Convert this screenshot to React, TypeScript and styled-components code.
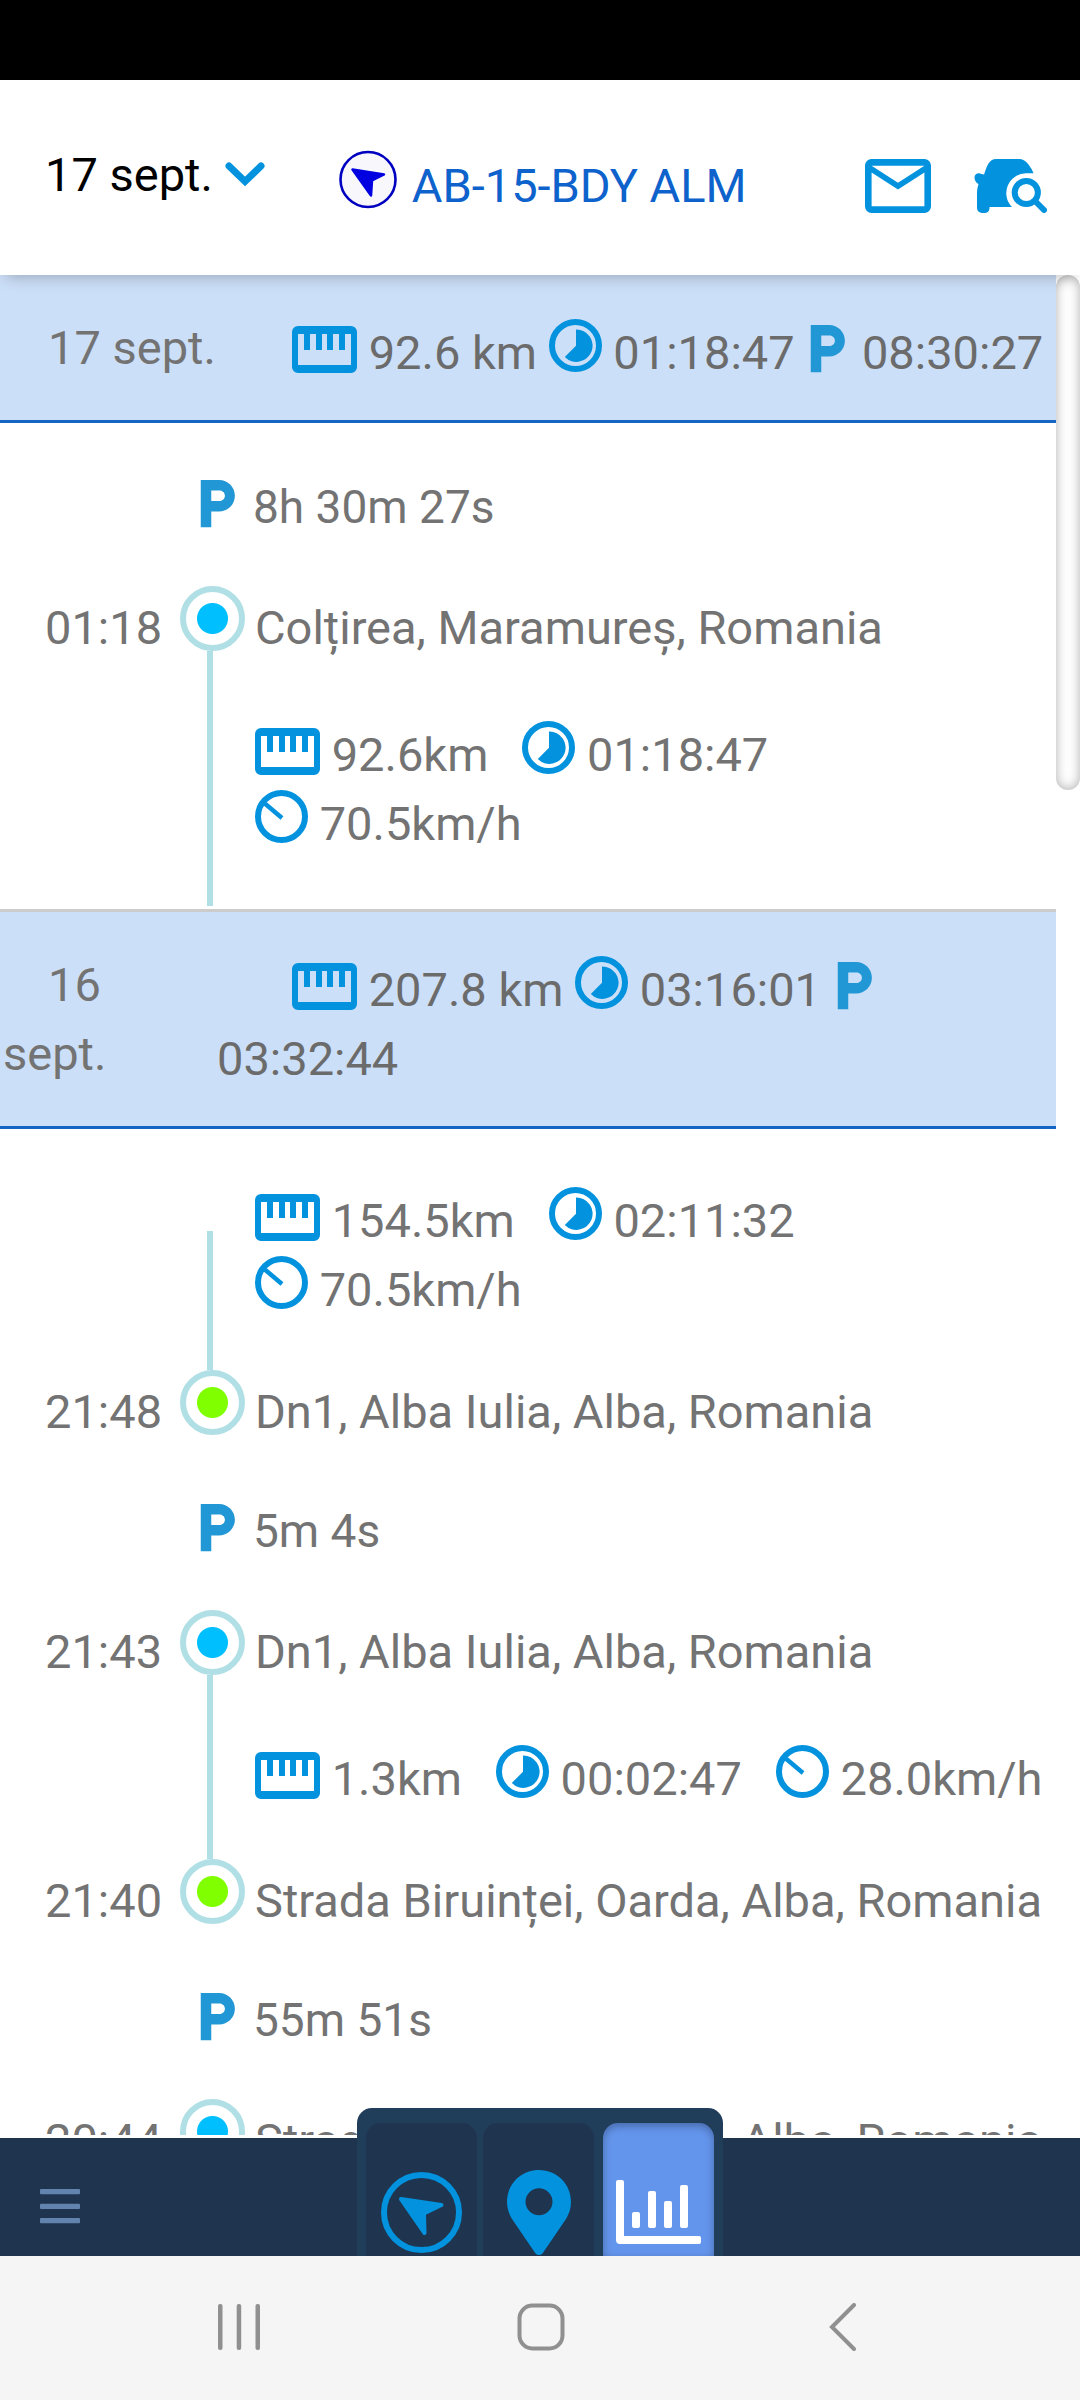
import React from "react";
import styled, { createGlobalStyle, css } from "styled-components";
import { MdLocalParking } from "react-icons/md";

const color = {
  accent: "#0292de",
  parking: "#2297d5",
  link: "#0d62cc",
  text: "#737373",
  summary: "#6b6b6b",
  band: "#ccdff8",
  bandLine: "#1566c4",
  rail: "#b0dfe5",
  navy: "#1e344f",
  dock: "#203d5a",
  active: "#6495ed",
  system: "#909090",
};

const GlobalStyle = createGlobalStyle`
  * { box-sizing: border-box; }
  body { margin: 0; background: #fff; }
`;

const Screen = styled.div`
  display: flex;
  flex-direction: column;
  height: 100vh;
  overflow: hidden;
  background: #fff;
  color: ${color.text};
  font-family: Roboto, "Noto Sans", sans-serif;
  font-size: 47px;
  line-height: 69px;
`;

const StatusBar = styled.div`
  flex: none;
  height: 80px;
  background: #000;
`;

const buttonReset = css`
  margin: 0;
  padding: 0;
  border: 0;
  background: none;
  font: inherit;
  color: inherit;
  cursor: pointer;
`;

const Header = styled.header`
  position: relative;
  z-index: 1;
  flex: none;
  display: flex;
  align-items: flex-start;
  height: 195px;
  padding: 60px 33px 0 45px;
  background: #fff;
  box-shadow: 0 8px 14px -6px rgba(0, 0, 0, 0.25);
`;

const DateButton = styled.button`
  ${buttonReset}
  display: flex;
  align-items: center;
  gap: 12px;
  color: #000;
`;

const Vehicle = styled.a`
  display: flex;
  align-items: flex-start;
  gap: 15px;
  margin: 10px auto 0 74px;
  line-height: 72px;
  color: ${color.link};
  text-decoration: none;
`;

const HeaderActions = styled.div`
  display: flex;
  gap: 43px;
  margin-top: 19px;
`;

const IconButton = styled.button`
  ${buttonReset}
  display: flex;
`;

const Scroller = styled.div`
  flex: 1;
  min-height: 0;
  display: flex;
  align-items: flex-start;
  overflow: hidden;
  margin-bottom: 3px;
`;

const Timeline = styled.main`
  flex: 1;
  min-width: 0;
`;

const ScrollTrack = styled.div`
  flex: none;
  width: 24px;
`;

const ScrollThumb = styled.div`
  height: 515px;
  border-radius: 12px;
  background: #fff;
  box-shadow: inset 0 0 12px rgba(0, 0, 0, 0.32);
`;

const DayBand = styled.header`
  display: grid;
  grid-template-columns: 217px 1fr;
  background: ${color.band};
  border-bottom: 3px solid ${color.bandLine};
`;

const DayDate = styled.h2<{ $stacked?: boolean }>`
  margin: 0;
  padding: 38px 0 38px 3px;
  width: ${(p) => (p.$stacked ? "min-content" : "auto")};
  font-size: inherit;
  font-weight: 400;
  text-indent: 45px;
`;

const DaySummary = styled.p`
  margin: 0;
  padding: 43px 0 33px;
  text-indent: 75px;
  color: ${color.summary};
`;

const Day = styled.section`
  & + & {
    border-top: 3px solid #ccc;
  }
`;

const Entries = styled.ol`
  margin: 0;
  padding: 24px 0 3px;
  list-style: none;
`;

const Entry = styled.li`
  display: grid;
  grid-template-columns: 135px 65px 1fr;
  padding-left: 45px;
`;

const Time = styled.time`
  padding: 26px 0 25px;
`;

const Rail = styled.div`
  display: flex;
  flex-direction: column;
`;

const RailLine = styled.div<{ $before?: boolean; $startsHere?: boolean }>`
  flex: ${(p) => (p.$before ? "none" : 1)};
  height: ${(p) => (p.$before ? "19px" : "auto")};
  width: 6px;
  margin-top: ${(p) => (p.$startsHere ? "78px" : 0)};
  margin-left: 27px;
  background: ${color.rail};
`;

const RailGap = styled.div`
  height: 19px;
`;

const Stop = styled.div<{ $arrival: boolean }>`
  flex: none;
  height: 65px;
  border: 6px solid ${color.rail};
  border-radius: 50%;
  background: radial-gradient(
    circle,
    ${(p) => (p.$arrival ? "#7fff00" : "#00bfff")} 15px,
    #fff 16px
  );
`;

const PlaceName = styled.div`
  padding: 26px 0 25px 10px;
`;

const ParkedTime = styled.div`
  padding: 26px 0 25px 8px;
  font-size: 46px;
`;

const ParkingRail = styled.div`
  padding: 26px 0 25px 16px;
`;

const Stats = styled.div<{ $last?: boolean }>`
  display: flex;
  flex-wrap: wrap;
  column-gap: 34px;
  padding: 33px 0 ${(p) => (p.$last ? 48 : 27)}px 10px;
`;

const Stat = styled.span`
  white-space: nowrap;
`;

const Glyph = styled.svg`
  display: inline-block;
  vertical-align: -4px;
  fill: none;
`;

const ParkingGlyph = styled(MdLocalParking)`
  width: 63px;
  height: 63px;
  margin: -8px -8px -8px -11px;
  vertical-align: -3px;
  color: ${color.parking};
`;

const Footer = styled.footer`
  position: relative;
  z-index: 1;
  flex: none;
  display: grid;
  grid-template-columns: 1fr auto 1fr;
  align-items: start;
  height: 118px;
  background: ${color.navy};
`;

const MenuButton = styled.button`
  ${buttonReset}
  display: flex;
  justify-self: start;
  padding: 51px 40px 0;
`;

const Dock = styled.nav`
  display: flex;
  gap: 6px;
  height: 148px;
  margin-top: -30px;
  padding: 15px 9px 0;
  border-radius: 15px 15px 0 0;
  background: ${color.dock};
`;

const DockTab = styled.button<{ $active?: boolean }>`
  ${buttonReset}
  display: flex;
  align-items: center;
  justify-content: center;
  width: 111px;
  height: 133px;
  padding-top: 45px;
  margin-left: ${(p) => (p.$active ? "3px" : 0)};
  border-radius: 15px 15px 0 0;
  background: ${(p) => (p.$active ? color.active : color.navy)};
  box-shadow: ${(p) => (p.$active ? "inset 0 3px 9px rgba(0, 0, 0, 0.3)" : "none")};
`;

const SystemNav = styled.nav`
  flex: none;
  display: flex;
  justify-content: center;
  height: 144px;
  padding: 0 0 2px 2px;
  background: #f5f5f5;
`;

const SystemButton = styled.button`
  ${buttonReset}
  display: flex;
  align-items: center;
  justify-content: center;
  width: 28%;
`;

const RulerIcon = () => (
  <Glyph width="65" height="47" viewBox="0 0 65 47" aria-hidden="true">
    <path
      fill={color.accent}
      fillRule="evenodd"
      d="M6 0H59a6 6 0 0 1 6 6V41a6 6 0 0 1-6 6H6a6 6 0 0 1-6-6V6a6 6 0 0 1 6-6ZM6 8V39H59V8H53V24H47V8H41V24H35V8H30V24H24V8H18V24H12V8Z"
    />
  </Glyph>
);

const ClockIcon = () => (
  <Glyph width="53" height="54" viewBox="0 0 53 54" aria-hidden="true">
    <circle cx="26.5" cy="26.5" r="23.5" stroke={color.accent} strokeWidth="6" />
    <path fill={color.accent} d="M27 10.5A16.2 16.2 0 1 1 15.8 38L27 26.7Z" />
  </Glyph>
);

const GaugeIcon = () => (
  <Glyph width="53" height="54" viewBox="0 0 53 54" aria-hidden="true">
    <circle cx="26.5" cy="26.5" r="23.5" stroke={color.accent} strokeWidth="6" />
    <path stroke={color.accent} strokeWidth="4.5" d="M8 12L27 28" />
  </Glyph>
);

const HeadingIcon = () => (
  <svg width="58" height="59" viewBox="0 0 58 59" aria-hidden="true">
    <circle cx="29" cy="29.5" r="27.5" fill="#f8f8fc" stroke="#0000c0" strokeWidth="2.6" />
    <path
      fill="#0000e0"
      stroke="#0000e0"
      strokeWidth="2.5"
      strokeLinejoin="round"
      d="M13.5 19.5L45 24.5L33 30.5L32 45.5Z"
    />
  </svg>
);

const ChevronIcon = () => (
  <svg width="40" height="25" viewBox="0 0 40 25" fill="none" aria-hidden="true">
    <path d="M4 4L20 19.5L36 4" stroke={color.accent} strokeWidth="7" strokeLinecap="round" />
  </svg>
);

const MailIcon = () => (
  <svg width="66" height="54" viewBox="2 4 20 16" preserveAspectRatio="none" aria-hidden="true">
    <path
      fill={color.accent}
      d="M22 6c0-1.1-.9-2-2-2H4c-1.1 0-2 .9-2 2v12c0 1.1.9 2 2 2h16c1.1 0 2-.9 2-2V6zm-2 0l-8 5-8-5h16zm0 12H4V8l8 5 8-5v10z"
    />
  </svg>
);

const CarSearchIcon = () => (
  <svg width="73" height="54" viewBox="0 0 73 54" fill="none" aria-hidden="true">
    <path
      fill={color.accent}
      d="M22 0H44C49 0 52 2 54.500 5.500Q58 10 59.600 14.300L52 14.300A19.800 19.800 0 0 0 38 48H15.500V49.500a5 4.500 0 0 1-5 4.500H8a5 5 0 0 1-5-5V34C3 30 4 27 4.500 25C2 24 .5 21 .5 18.500C.5 15 4 13 7.500 15L10 15.500C13 7 15 0 22 0Z"
    />
    <circle cx="52.300" cy="33.500" r="11.600" stroke={color.accent} strokeWidth="6" />
    <path d="M62 43L70 51" stroke={color.accent} strokeWidth="6" strokeLinecap="round" />
  </svg>
);

const MenuIcon = () => (
  <svg width="40" height="35" viewBox="0 0 40 35" fill="#6283ad" aria-hidden="true">
    <rect width="40" height="5.300" rx="1" />
    <rect y="14.700" width="40" height="5.300" rx="1" />
    <rect y="29" width="40" height="5.300" rx="1" />
  </svg>
);

const DockHeadingIcon = () => (
  <svg width="81" height="81" viewBox="0 0 81 81" fill="none" aria-hidden="true">
    <circle cx="40.500" cy="40.500" r="37.500" stroke={color.accent} strokeWidth="6" />
    <path
      fill={color.accent}
      stroke={color.accent}
      strokeWidth="4"
      strokeLinejoin="round"
      d="M20 27L60.500 33L43 41.500L43.500 61Z"
    />
  </svg>
);

const PinIcon = () => (
  <svg width="64" height="85" viewBox="0 0 64 85" aria-hidden="true">
    <path
      fill={color.accent}
      fillRule="evenodd"
      d="M32 0C14 0 0 14 0 32C0 38 2 44 5 49L28.500 83.500q3.500 3 7 0L59 49C62 44 64 38 64 32C64 14 50 0 32 0ZM32 18.200a13.500 13.500 0 1 1 0 27a13.500 13.500 0 1 1 0-27Z"
    />
  </svg>
);

const ChartIcon = () => (
  <svg width="85" height="64" viewBox="0 0 85 64" fill="#fff" aria-hidden="true">
    <path d="M2 0H6a2 2 0 0 1 2 2V56H83a2 2 0 0 1 2 2V62a2 2 0 0 1-2 2H4a4 4 0 0 1-4-4V2a2 2 0 0 1 2-2Z" />
    <rect x="16" y="32" width="8" height="16" rx="2" />
    <rect x="32" y="11" width="8" height="37" rx="2" />
    <rect x="48" y="21" width="8" height="27" rx="2" />
    <rect x="64" y="5" width="8" height="43" rx="2" />
  </svg>
);

const RecentsIcon = () => (
  <svg width="42" height="46" viewBox="0 0 42 46" fill={color.system} aria-hidden="true">
    <rect width="4.500" height="46" rx="2" />
    <rect x="18.700" width="4.500" height="46" rx="2" />
    <rect x="37.500" width="4.500" height="46" rx="2" />
  </svg>
);

const HomeIcon = () => (
  <svg width="48" height="48" viewBox="0 0 48 48" fill="none" aria-hidden="true">
    <rect x="2.500" y="2.500" width="43" height="43" rx="13" stroke={color.system} strokeWidth="4" />
  </svg>
);

const BackIcon = () => (
  <svg width="27" height="48" viewBox="0 0 27 48" fill="none" aria-hidden="true">
    <path d="M25 2L3 24L25 46" stroke={color.system} strokeWidth="4" strokeLinecap="round" />
  </svg>
);

type Trip = {
  kind: "trip";
  distance: string;
  duration: string;
  speed: string;
  edge?: "first" | "last";
};
type Place = { kind: "place"; time: string; name: string; arrival: boolean };
type Parked = { kind: "parked"; duration: string };
type Item = Trip | Place | Parked;

type DayData = {
  date: string;
  stacked?: boolean;
  distance: string;
  driving: string;
  parked: string;
  items: Item[];
};

const days: DayData[] = [
  {
    date: "17 sept.",
    distance: "92.6",
    driving: "01:18:47",
    parked: "08:30:27",
    items: [
      { kind: "parked", duration: "8h 30m 27s" },
      { kind: "place", time: "01:18", name: "Colțirea, Maramureș, Romania", arrival: false },
      { kind: "trip", distance: "92.6km", duration: "01:18:47", speed: "70.5km/h", edge: "last" },
    ],
  },
  {
    date: "16 sept.",
    stacked: true,
    distance: "207.8",
    driving: "03:16:01",
    parked: "03:32:44",
    items: [
      { kind: "trip", distance: "154.5km", duration: "02:11:32", speed: "70.5km/h", edge: "first" },
      { kind: "place", time: "21:48", name: "Dn1, Alba Iulia, Alba, Romania", arrival: true },
      { kind: "parked", duration: "5m 4s" },
      { kind: "place", time: "21:43", name: "Dn1, Alba Iulia, Alba, Romania", arrival: false },
      { kind: "trip", distance: "1.3km", duration: "00:02:47", speed: "28.0km/h" },
      { kind: "place", time: "21:40", name: "Strada Biruinței, Oarda, Alba, Romania", arrival: true },
      { kind: "parked", duration: "55m 51s" },
      { kind: "place", time: "20:44", name: "Strada Biruinței, Oarda, Alba, Romania", arrival: false },
    ],
  },
];

function TimelineEntry({ item }: { item: Item }) {
  if (item.kind === "parked") {
    return (
      <Entry>
        <span />
        <ParkingRail>
          <ParkingGlyph aria-label="Parcat" />
        </ParkingRail>
        <ParkedTime>{item.duration}</ParkedTime>
      </Entry>
    );
  }
  if (item.kind === "place") {
    return (
      <Entry>
        <Time>{item.time}</Time>
        <Rail>
          {item.arrival ? <RailLine $before /> : <RailGap />}
          <Stop $arrival={item.arrival} />
          {!item.arrival && <RailLine />}
        </Rail>
        <PlaceName>{item.name}</PlaceName>
      </Entry>
    );
  }
  return (
    <Entry>
      <span />
      <Rail>
        <RailLine $startsHere={item.edge === "first"} />
      </Rail>
      <Stats $last={item.edge === "last"}>
        <Stat>
          <RulerIcon /> {item.distance}
        </Stat>
        <Stat>
          <ClockIcon /> {item.duration}
        </Stat>
        <Stat>
          <GaugeIcon /> {item.speed}
        </Stat>
      </Stats>
    </Entry>
  );
}

export default function App() {
  return (
    <Screen>
      <GlobalStyle />
      <StatusBar />
      <Header>
        <DateButton type="button">
          17 sept.
          <ChevronIcon />
        </DateButton>
        <Vehicle href="#vehicle">
          <HeadingIcon />
          AB-15-BDY ALM
        </Vehicle>
        <HeaderActions>
          <IconButton type="button" aria-label="Mesaje">
            <MailIcon />
          </IconButton>
          <IconButton type="button" aria-label="Caută vehicul">
            <CarSearchIcon />
          </IconButton>
        </HeaderActions>
      </Header>

      <Scroller>
        <Timeline>
          {days.map((day) => (
            <Day key={day.date}>
              <DayBand>
                <DayDate $stacked={day.stacked}>{day.date}</DayDate>
                <DaySummary>
                  <RulerIcon /> {day.distance} km <ClockIcon /> {day.driving} <ParkingGlyph />{" "}
                  {day.parked}
                </DaySummary>
              </DayBand>
              <Entries>
                {day.items.map((item, i) => (
                  <TimelineEntry key={i} item={item} />
                ))}
              </Entries>
            </Day>
          ))}
        </Timeline>
        <ScrollTrack>
          <ScrollThumb />
        </ScrollTrack>
      </Scroller>

      <Footer>
        <MenuButton type="button" aria-label="Meniu">
          <MenuIcon />
        </MenuButton>
        <Dock>
          <DockTab type="button" aria-label="Vehicule">
            <DockHeadingIcon />
          </DockTab>
          <DockTab type="button" aria-label="Hartă">
            <PinIcon />
          </DockTab>
          <DockTab type="button" aria-label="Rapoarte" $active>
            <ChartIcon />
          </DockTab>
        </Dock>
      </Footer>

      <SystemNav>
        <SystemButton type="button" aria-label="Recente">
          <RecentsIcon />
        </SystemButton>
        <SystemButton type="button" aria-label="Acasă">
          <HomeIcon />
        </SystemButton>
        <SystemButton type="button" aria-label="Înapoi">
          <BackIcon />
        </SystemButton>
      </SystemNav>
    </Screen>
  );
}
